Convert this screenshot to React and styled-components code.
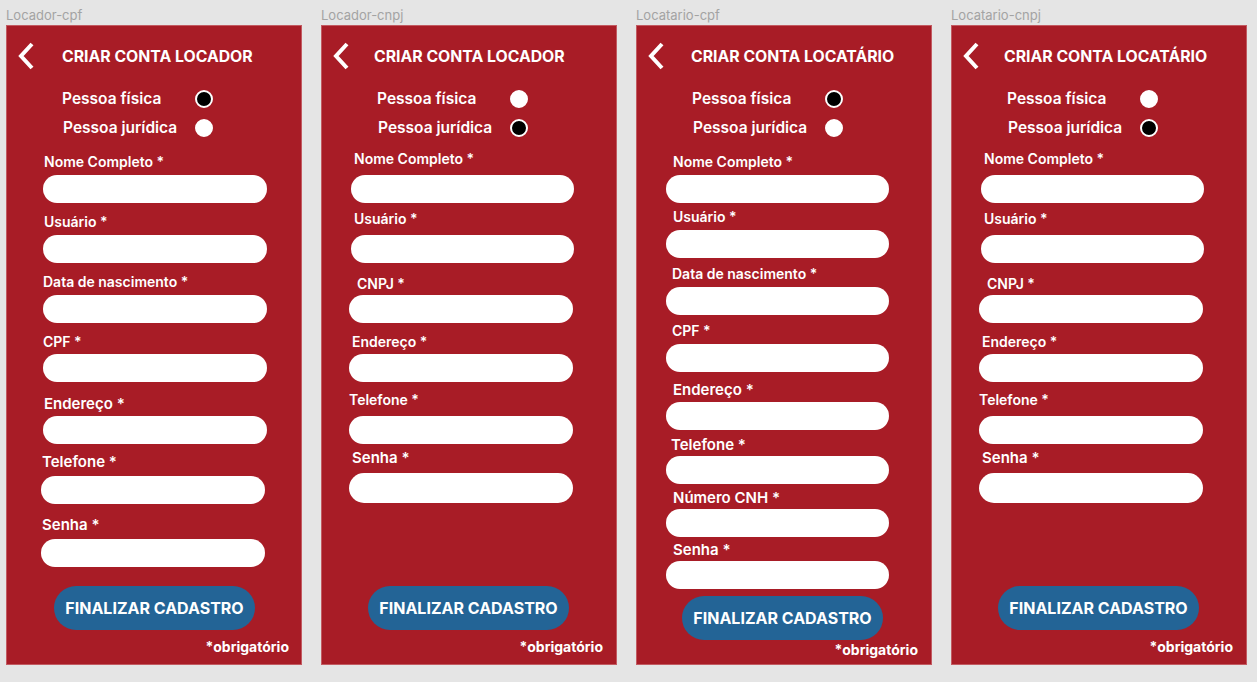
import React from "react";
import styled, { createGlobalStyle } from "styled-components";

const GlobalStyle = createGlobalStyle`
  body {
    margin: 0;
    background: #e5e5e5;
    font-family: Inter, "Noto Sans", "Liberation Sans", sans-serif;
  }
`;

const Board = styled.div`
  display: flex;
  gap: 19px;
  padding-left: 6px;
  height: 682px;
  overflow: hidden;
`;

const Column = styled.section`
  display: flex;
  flex-direction: column;
  width: 296px;
`;

const FrameName = styled.div`
  padding-top: 5px;
  height: 20px;
  line-height: 20px;
  font-size: 13px;
  color: #a3a3a3;
`;

const Frame = styled.div`
  box-sizing: border-box;
  width: 296px;
  height: 640px;
  background: #a81c26;
  border: 1px solid #c25a61;
  display: flex;
  flex-direction: column;
  color: #fff;
`;

const Header = styled.div`
  box-sizing: border-box;
  display: flex;
  align-items: center;
  height: 58px;
  padding: 2px 0 0 10px;
`;

const Title = styled.h1`
  margin: 0 0 0 ${(p) => p.$gap}px;
  font-size: 15.8px;
  font-weight: 700;
`;

const RadioRow = styled.label`
  display: flex;
  align-items: center;
  height: 29px;
  padding-left: ${(p) => p.$indent}px;
`;

const RadioText = styled.span`
  width: ${(p) => p.$width}px;
  font-size: 15.5px;
  font-weight: 600;
`;

const Radio = styled.span`
  box-sizing: border-box;
  width: 18px;
  height: 18px;
  border-radius: 50%;
  background: ${(p) => (p.$checked ? "#000" : "#fff")};
  border: 2px solid #fff;
`;

const Label = styled.div`
  line-height: 17px;
  height: 17px;
  font-size: ${(p) => p.$size}px;
  font-weight: 600;
  margin-top: ${(p) => p.$mt}px;
  margin-left: ${(p) => p.$ml}px;
  white-space: nowrap;
`;

const Input = styled.div`
  background: #fff;
  width: ${(p) => p.$w}px;
  height: ${(p) => p.$h}px;
  border-radius: ${(p) => p.$h / 2}px;
  margin-top: ${(p) => p.$mt}px;
  margin-left: ${(p) => p.$ml}px;
`;

const SubmitButton = styled.button`
  align-self: flex-start;
  width: 201px;
  height: 44px;
  border: 0;
  border-radius: 22px;
  background: #236496;
  color: #fff;
  font-family: inherit;
  font-size: 16px;
  font-weight: 700;
  margin-top: ${(p) => p.$mt}px;
  margin-left: ${(p) => p.$ml}px;
  padding: 0;
`;

const Required = styled.div`
  align-self: flex-end;
  line-height: 17px;
  font-size: 14px;
  font-weight: 700;
  margin-top: ${(p) => p.$mt}px;
  margin-right: ${(p) => p.$mr}px;
`;

const BackIcon = () => (
  <svg width="20" height="30" viewBox="0 0 20 30">
    <path d="M15 3 L4 15 L15 27" fill="none" stroke="#fff" strokeWidth="4" />
  </svg>
);

const cnpjFields = [
  { label: "Nome Completo *", ly: 134, lx: 32, iy: 151, ix: 29, iw: 223 },
  { label: "Usuário *", ly: 194, lx: 32, iy: 211, ix: 29, iw: 223 },
  { label: "CNPJ *", ly: 259, lx: 35, iy: 271, ix: 27, iw: 224 },
  { label: "Endereço *", ly: 317, lx: 30, iy: 330, ix: 27, iw: 224 },
  { label: "Telefone *", ly: 375, lx: 27, iy: 392, ix: 27, iw: 224 },
  { label: "Senha *", ly: 433, lx: 30, iy: 449, ix: 27, iw: 224, ih: 30, size: 15 },
];

const frames = [
  {
    name: "Locador-cpf",
    title: "CRIAR CONTA LOCADOR",
    titleGap: 25,
    pj: false,
    fields: [
      { label: "Nome Completo *", ly: 137, lx: 37, iy: 151, ix: 36, iw: 224 },
      { label: "Usuário *", ly: 197, lx: 37, iy: 211, ix: 36, iw: 224 },
      { label: "Data de nascimento *", ly: 257, lx: 36, iy: 271, ix: 36, iw: 224 },
      { label: "CPF *", ly: 317, lx: 36, iy: 330, ix: 36, iw: 224 },
      { label: "Endereço *", ly: 379, lx: 37, iy: 392, ix: 36, iw: 224, size: 15 },
      { label: "Telefone *", ly: 437, lx: 35, iy: 452, ix: 34, iw: 224, size: 15 },
      { label: "Senha *", ly: 500, lx: 35, iy: 515, ix: 34, iw: 224, size: 15 },
    ],
    button: { x: 47, y: 562 },
    req: { y: 622, right: 283 },
  },
  {
    name: "Locador-cnpj",
    title: "CRIAR CONTA LOCADOR",
    titleGap: 22,
    pj: true,
    fields: cnpjFields,
    button: { x: 46, y: 562 },
    req: { y: 622, right: 282 },
  },
  {
    name: "Locatario-cpf",
    title: "CRIAR CONTA LOCATÁRIO",
    titleGap: 24,
    pj: false,
    fields: [
      { label: "Nome Completo *", ly: 137, lx: 36, iy: 151, ix: 29, iw: 223 },
      { label: "Usuário *", ly: 192, lx: 36, iy: 206, ix: 29, iw: 223 },
      { label: "Data de nascimento *", ly: 249, lx: 35, iy: 263, ix: 29, iw: 223 },
      { label: "CPF *", ly: 306, lx: 35, iy: 320, ix: 29, iw: 223 },
      { label: "Endereço *", ly: 365, lx: 36, iy: 378, ix: 29, iw: 223, size: 15 },
      { label: "Telefone *", ly: 420, lx: 34, iy: 432, ix: 29, iw: 223, size: 15 },
      { label: "Número CNH *", ly: 473, lx: 36, iy: 485, ix: 29, iw: 223, size: 15 },
      { label: "Senha *", ly: 525, lx: 36, iy: 537, ix: 29, iw: 223, size: 15 },
    ],
    button: { x: 45, y: 572 },
    req: { y: 625, right: 282 },
  },
  {
    name: "Locatario-cnpj",
    title: "CRIAR CONTA LOCATÁRIO",
    titleGap: 22,
    pj: true,
    fields: cnpjFields,
    button: { x: 46, y: 562 },
    req: { y: 622, right: 282 },
  },
];

function SignupFrame({ frame }) {
  // mockup y positions (relative to the frame's outer edge) turned into flow margins
  let cursor = 118;
  const rows = frame.fields.map((f) => {
    const ih = f.ih || 28;
    const labelTop = f.ly - 8.5 - cursor;
    const inputTop = f.iy - (f.ly + 8.5);
    cursor = f.iy + ih;
    return (
      <React.Fragment key={f.label}>
        <Label $size={f.size || 14} $mt={labelTop} $ml={f.lx}>
          {f.label}
        </Label>
        <Input $w={f.iw} $h={ih} $mt={inputTop} $ml={f.ix} />
      </React.Fragment>
    );
  });
  const buttonTop = frame.button.y - cursor;
  const reqTop = frame.req.y - 8.5 - (frame.button.y + 44);

  return (
    <Column>
      <FrameName>{frame.name}</FrameName>
      <Frame>
        <Header>
          <BackIcon />
          <Title $gap={frame.titleGap}>{frame.title}</Title>
        </Header>
        <RadioRow $indent={55}>
          <RadioText $width={133}>Pessoa física</RadioText>
          <Radio $checked={!frame.pj} />
        </RadioRow>
        <RadioRow $indent={56}>
          <RadioText $width={132}>Pessoa jurídica</RadioText>
          <Radio $checked={frame.pj} />
        </RadioRow>
        {rows}
        <SubmitButton $mt={buttonTop} $ml={frame.button.x}>
          FINALIZAR CADASTRO
        </SubmitButton>
        <Required $mt={reqTop} $mr={296 - frame.req.right - 1}>
          *obrigatório
        </Required>
      </Frame>
    </Column>
  );
}

export default function App() {
  return (
    <>
      <GlobalStyle />
      <Board>
        {frames.map((f) => (
          <SignupFrame key={f.name} frame={f} />
        ))}
      </Board>
    </>
  );
}
